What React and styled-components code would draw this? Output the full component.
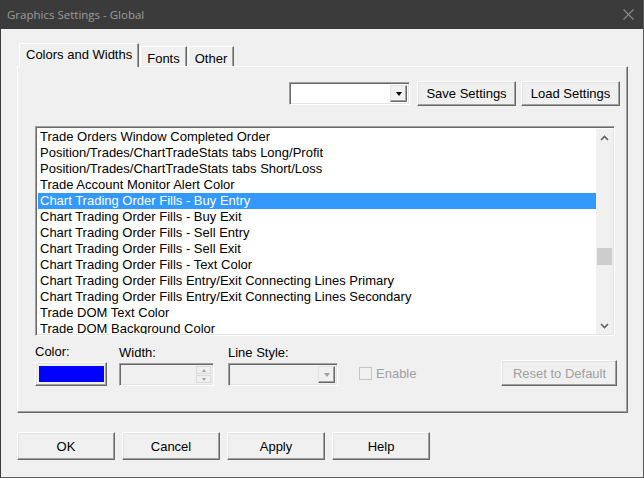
import React from 'react';
import styled, { createGlobalStyle } from 'styled-components';

const GlobalStyle = createGlobalStyle`
  html, body {
    margin: 0;
    padding: 0;
    background: #f0f0f0;
  }
  * {
    box-sizing: border-box;
  }
`

const Window = styled.div`
  width: 644px;
  height: 478px;
  display: flex;
  flex-direction: column;
  background: #f0f0f0;
  border-left: 1px solid #3a3a3a;
  border-right: 1px solid #5a5a5a;
  border-bottom: 1px solid #5a5a5a;
  font-family: "Liberation Sans", Arial, sans-serif;
  font-size: 13px;
  color: #000;
  overflow: hidden;
`

const TitleBar = styled.div`
  height: 29px;
  flex: none;
  display: flex;
  align-items: center;
  justify-content: space-between;
  background: #3b3b3b;
  color: #9c9c9c;
  font-family: "Open Sans", "Noto Sans", sans-serif;
  font-size: 11.5px;
  padding: 0 9px 1px 6px;
`

const Body = styled.div`
  flex: 1;
  display: flex;
  flex-direction: column;
  padding: 14px 0 0 16px;
`

const TabRow = styled.div`
  display: flex;
  align-items: flex-end;
  height: 23px;
  padding-left: 2px;
  position: relative;
  z-index: 1;
`

const Tab = styled.div`
  height: ${p => (p.$active ? '24px' : '20px')};
  margin-bottom: ${p => (p.$active ? '-1px' : '0')};
  margin-left: ${p => (p.$active ? '0' : '1px')};
  padding: ${p => (p.$active ? '3px 6px 0 6px' : '4px 6px 0 6px')};
  background: #f0f0f0;
  border-top: 1px solid #fff;
  border-left: 1px solid #fff;
  border-right: 1px solid #696969;
  box-shadow: inset -1px 0 0 #a0a0a0;
  white-space: nowrap;
`

const Panel = styled.div`
  width: 611px;
  height: 347px;
  display: flex;
  flex-direction: column;
  border-top: 1px solid #fff;
  border-left: 1px solid #fff;
  border-right: 1px solid #696969;
  border-bottom: 1px solid #696969;
  box-shadow: inset -1px -1px 0 #a0a0a0;
  padding: 14px 0 0 17px;
`

const TopRow = styled.div`
  display: flex;
  justify-content: flex-end;
  align-items: center;
  gap: 5px;
  padding-right: 7px;
`

const Combo = styled.div`
  width: ${p => p.$width}px;
  height: ${p => p.$height || 23}px;
  display: flex;
  justify-content: flex-end;
  background: ${p => (p.$disabled ? '#f0f0f0' : '#fff')};
  border-top: 1px solid #a0a0a0;
  border-left: 1px solid #a0a0a0;
  border-right: 1px solid #fff;
  border-bottom: 1px solid #fff;
  box-shadow: inset 1px 1px 0 #696969, inset -1px -1px 0 #e3e3e3;
  padding: 2px;
  margin-right: 2px;
`

const DropButton = styled.div`
  width: 17px;
  height: 100%;
  display: flex;
  align-items: center;
  justify-content: center;
  background: #f0f0f0;
  border-top: 1px solid #e3e3e3;
  border-left: 1px solid #e3e3e3;
  border-right: 1px solid #696969;
  border-bottom: 1px solid #696969;
  box-shadow: inset -1px -1px 0 #a0a0a0;
`

const Arrow = styled.div`
  width: 0;
  height: 0;
  border-left: 3.5px solid transparent;
  border-right: 3.5px solid transparent;
  border-top: 4px solid ${p => (p.$disabled ? '#a0a0a0' : '#000')};
`

const Button = styled.div`
  width: ${p => p.$width}px;
  height: ${p => p.$height}px;
  display: flex;
  align-items: center;
  justify-content: center;
  background: #f0f0f0;
  color: ${p => (p.$disabled ? '#a0a0a0' : '#000')};
  border-top: 1px solid #fff;
  border-left: 1px solid #fff;
  border-right: 1px solid #696969;
  border-bottom: 1px solid #696969;
  box-shadow: inset -1px -1px 0 #a0a0a0, inset 1px 1px 0 #e3e3e3;
  white-space: nowrap;
`

const ListBox = styled.div`
  width: 580px;
  height: 210px;
  margin-top: 20px;
  display: flex;
  background: #fff;
  border-top: 1px solid #a0a0a0;
  border-left: 1px solid #a0a0a0;
  border-right: 1px solid #fff;
  border-bottom: 1px solid #fff;
  box-shadow: inset 1px 1px 0 #696969, inset -1px -1px 0 #e3e3e3;
  padding: 2px 1px 1px 2px;
  overflow: hidden;
`

const Rows = styled.div`
  flex: 1;
  display: flex;
  flex-direction: column;
  overflow: hidden;
`

const Row = styled.div`
  height: 16px;
  flex: none;
  line-height: 16px;
  padding-left: 2px;
  white-space: nowrap;
  background: ${p => (p.$selected ? '#3399ff' : 'transparent')};
  color: ${p => (p.$selected ? '#fff' : '#000')};
`

const ScrollBar = styled.div`
  width: 17px;
  flex: none;
  display: flex;
  flex-direction: column;
  align-items: center;
  background: #f0f0f0;
`

const ScrollArrow = styled.div`
  height: 17px;
  width: 17px;
  display: flex;
  align-items: center;
  justify-content: center;
`

const Track = styled.div`
  flex: 1;
  width: 100%;
  display: flex;
  flex-direction: column;
  padding-top: 102px;
`

const Thumb = styled.div`
  height: 17px;
  width: 15px;
  margin-left: 1px;
  background: #cdcdcd;
`

const Controls = styled.div`
  display: flex;
  align-items: flex-end;
  margin-top: 9px;
`

const Field = styled.div`
  display: flex;
  flex-direction: column;
  gap: 4px;
  margin-right: ${p => p.$gap}px;
`

const Label = styled.div`
  height: 13px;
  line-height: 13px;
  color: ${p => (p.$disabled ? '#a0a0a0' : '#000')};
`

const ColorSwatch = styled.div`
  align-self: stretch;
  flex: 1;
  background: #0000ff;
  margin: 3px 2px 3px 3px;
`

const Spin = styled.div`
  width: 15px;
  height: 100%;
  display: flex;
  flex-direction: column;
  gap: 1px;
`

const SpinPart = styled.div`
  flex: 1;
  display: flex;
  align-items: center;
  justify-content: center;
  background: #f0f0f0;
  border: 1px solid #d9d9d9;
`

const SmallArrow = styled.div`
  width: 0;
  height: 0;
  border-left: 2.5px solid transparent;
  border-right: 2.5px solid transparent;
  ${p => (p.$up ? 'border-bottom' : 'border-top')}: 3px solid #a0a0a0;
`

const CheckWrap = styled.div`
  display: flex;
  align-items: center;
  gap: 4px;
  height: 24px;
  margin-right: 85px;
  padding-bottom: 1px;
`

const CheckBox = styled.div`
  width: 13px;
  height: 13px;
  border: 1px solid #c5c5c5;
  background: #f0f0f0;
`

const ButtonRow = styled.div`
  display: flex;
  gap: 7px;
  margin-top: 19px;
`

const Chevron = ({ down }) => (
  <svg width="9" height="6" viewBox="0 0 9 6">
    <path
      d={down ? 'M1 1 L4.5 4.5 L8 1' : 'M1 5 L4.5 1.5 L8 5'}
      fill="none"
      stroke="#606060"
      strokeWidth="1.6"
    />
  </svg>
);

const CloseIcon = () => (
  <svg width="11" height="11" viewBox="0 0 11 11">
    <path d="M0.5 0.5 L10.5 10.5 M10.5 0.5 L0.5 10.5" stroke="#8a8a8a" strokeWidth="1.1" />
  </svg>
);

const items = [
  'Trade Orders Window Completed Order',
  'Position/Trades/ChartTradeStats tabs Long/Profit',
  'Position/Trades/ChartTradeStats tabs Short/Loss',
  'Trade Account Monitor Alert Color',
  'Chart Trading Order Fills - Buy Entry',
  'Chart Trading Order Fills - Buy Exit',
  'Chart Trading Order Fills - Sell Entry',
  'Chart Trading Order Fills - Sell Exit',
  'Chart Trading Order Fills - Text Color',
  'Chart Trading Order Fills Entry/Exit Connecting Lines Primary',
  'Chart Trading Order Fills Entry/Exit Connecting Lines Secondary',
  'Trade DOM Text Color',
  'Trade DOM Background Color',
];

export default function App() {
  return (
    <>
      <GlobalStyle />
      <Window>
        <TitleBar>
          <span>Graphics Settings - Global</span>
          <CloseIcon />
        </TitleBar>
        <Body>
          <TabRow>
            <Tab $active>Colors and Widths</Tab>
            <Tab>Fonts</Tab>
            <Tab>Other</Tab>
          </TabRow>
          <Panel>
            <TopRow>
              <Combo $width={121}>
                <DropButton><Arrow /></DropButton>
              </Combo>
              <Button $width={99} $height={25}>Save Settings</Button>
              <Button $width={99} $height={25}>Load Settings</Button>
            </TopRow>
            <ListBox>
              <Rows>
                {items.map((item, i) => (
                  <Row key={item} $selected={i === 4}>{item}</Row>
                ))}
              </Rows>
              <ScrollBar>
                <ScrollArrow><Chevron /></ScrollArrow>
                <Track><Thumb /></Track>
                <ScrollArrow><Chevron down /></ScrollArrow>
              </ScrollBar>
            </ListBox>
            <Controls>
              <Field $gap={12}>
                <Label>Color:</Label>
                <Button $width={72} $height={24}><ColorSwatch /></Button>
              </Field>
              <Field $gap={12}>
                <Label>Width:</Label>
                <Combo $width={95} $disabled>
                  <Spin>
                    <SpinPart><SmallArrow $up /></SpinPart>
                    <SpinPart><SmallArrow /></SpinPart>
                  </Spin>
                </Combo>
              </Field>
              <Field $gap={19}>
                <Label>Line Style:</Label>
                <Combo $width={110} $disabled>
                  <DropButton><Arrow $disabled /></DropButton>
                </Combo>
              </Field>
              <CheckWrap>
                <CheckBox />
                <Label $disabled>Enable</Label>
              </CheckWrap>
              <Button $width={116} $height={26} $disabled>Reset to Default</Button>
            </Controls>
          </Panel>
          <ButtonRow>
            <Button $width={98} $height={28}>OK</Button>
            <Button $width={98} $height={28}>Cancel</Button>
            <Button $width={98} $height={28}>Apply</Button>
            <Button $width={98} $height={28}>Help</Button>
          </ButtonRow>
        </Body>
      </Window>
    </>
  );
}
